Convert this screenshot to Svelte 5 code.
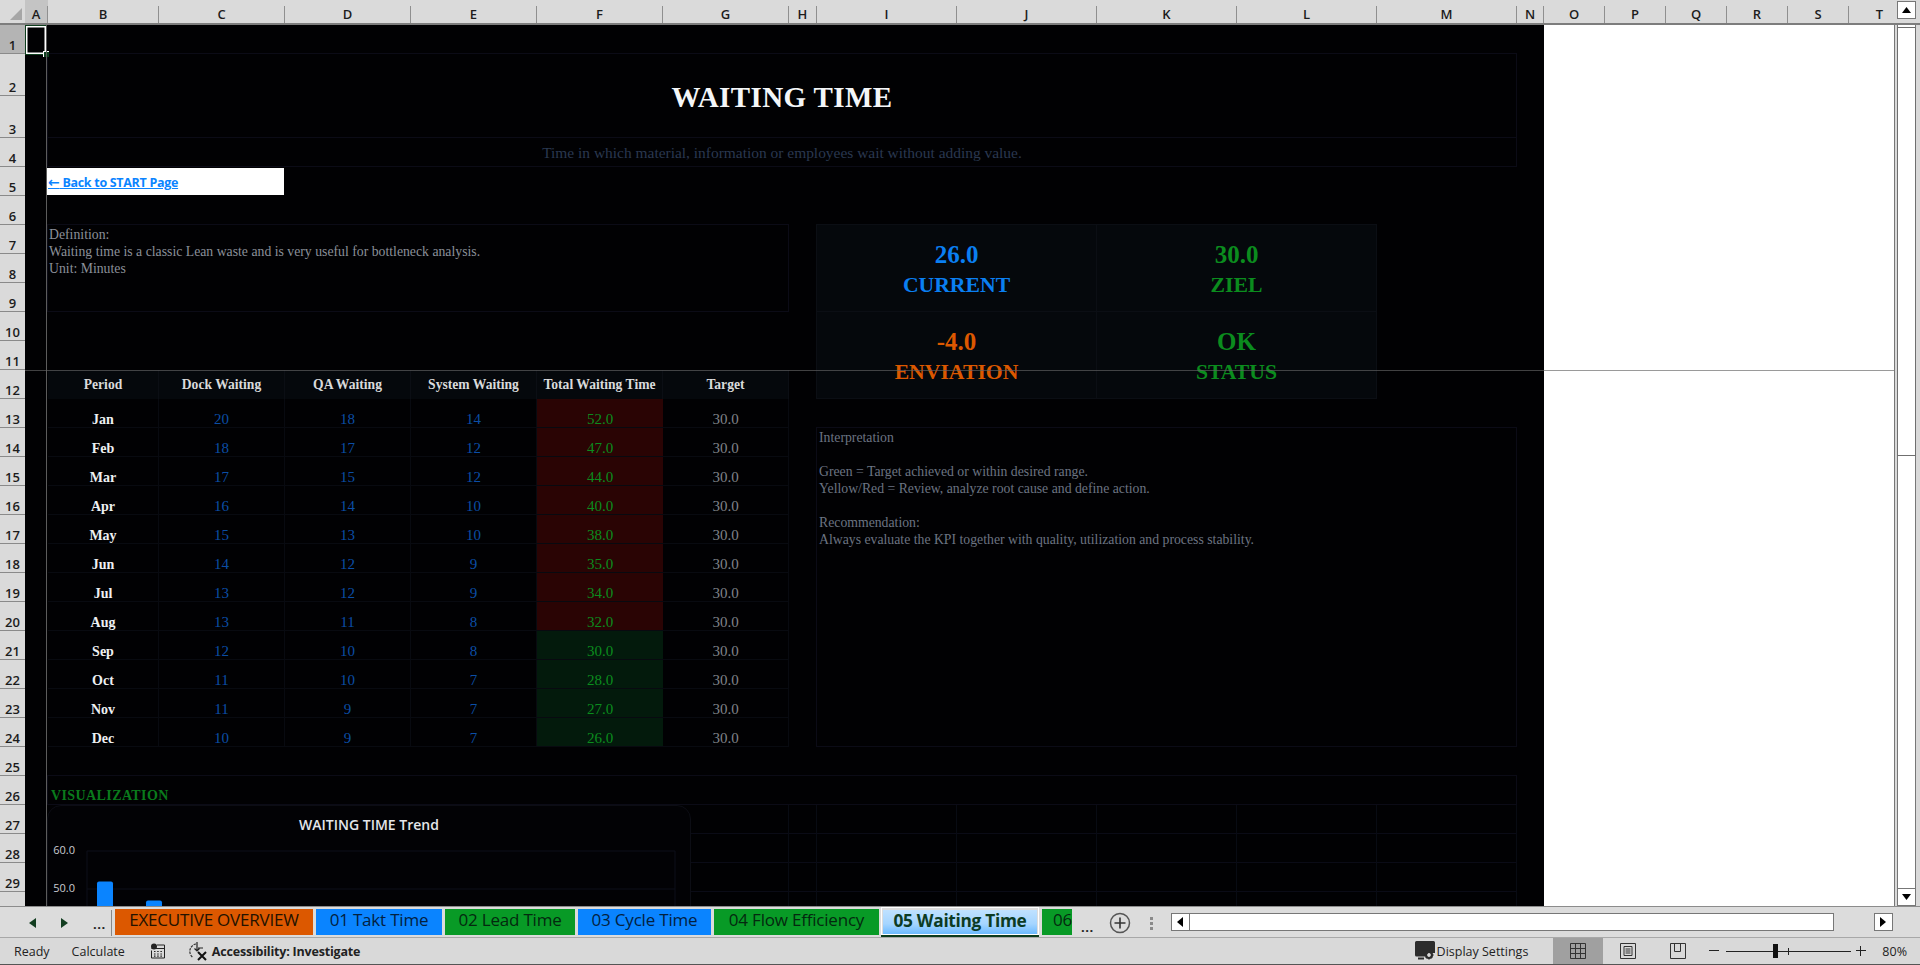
<script>
  const columns = ['A', 'B', 'C', 'D', 'E', 'F', 'G', 'H', 'I', 'J', 'K', 'L', 'M', 'N', 'O', 'P', 'Q', 'R', 'S', 'T']
  const rowNumbers = Array.from({ length: 29 }, (_, i) => i + 1)

  const headers = ['Period', 'Dock Waiting', 'QA Waiting', 'System Waiting', 'Total Waiting Time', 'Target']
  const months = [
    ['Jan', 20, 18, 14, 52],
    ['Feb', 18, 17, 12, 47],
    ['Mar', 17, 15, 12, 44],
    ['Apr', 16, 14, 10, 40],
    ['May', 15, 13, 10, 38],
    ['Jun', 14, 12, 9, 35],
    ['Jul', 13, 12, 9, 34],
    ['Aug', 13, 11, 8, 32],
    ['Sep', 12, 10, 8, 30],
    ['Oct', 11, 10, 7, 28],
    ['Nov', 11, 9, 7, 27],
    ['Dec', 10, 9, 7, 26]
  ]
  const target = 30

  const kpis = [
    { value: '26.0', label: 'CURRENT', tone: 'blue' },
    { value: '30.0', label: 'ZIEL', tone: 'green' },
    { value: '-4.0', label: 'ENVIATION', tone: 'orange' },
    { value: 'OK', label: 'STATUS', tone: 'green' }
  ]

  const tabs = [
    { name: 'EXECUTIVE OVERVIEW', cls: 'orange', width: 198 },
    { name: '01 Takt Time', cls: 'blue', width: 126 },
    { name: '02 Lead Time', cls: 'green', width: 130 },
    { name: '03 Cycle Time', cls: 'blue', width: 133 },
    { name: '04 Flow Efficiency', cls: 'green', width: 165 },
    { name: '05 Waiting Time', cls: 'active', width: 158 },
    { name: '06', cls: 'green cut', width: 30 }
  ]

  // chart scale: 10 units = 38px, baseline of the plot is at 60.0
  const plotTop = 45
  const toY = (v) => plotTop + (60 - v) * 3.8
  const bars = months.map((m, i) => ({ x: 50 + i * 49, y: toY(m[4]), h: 380 - toY(m[4]) }))
  const ticks = [60, 50]

  const fillerCells = Array.from({ length: 48 })
</script>

<div class="app">
  <div class="colhead">
    <div class="corner"><span class="tri"></span></div>
    {#each columns as col, i}
      <div class="col col-{col}" class:sel={i === 0}>{col}</div>
    {/each}
    <div class="vs-top"><button class="sb-btn" aria-label="up"><svg width="9" height="6" viewBox="0 0 9 6"><path d="M0 6 4.500 0 9 6z" fill="#000" /></svg></button></div>
  </div>

  <div class="main">
    <div class="rowhead">
      {#each rowNumbers as n}
        <div class="rownum" class:tall={n === 2 || n === 3} class:sel={n === 1}>{n}</div>
      {/each}
    </div>

    <div class="sheet">
      <div class="blank"></div>
      <div class="activecell"><span class="handle"></span></div>

      <div class="box title">WAITING TIME</div>
      <div class="box subtitle">Time in which material, information or employees wait without adding value.</div>
      <div class="backlink"><a href="#start"><span class="arrow">←</span> Back to START Page</a></div>

      <div class="box note definition">
        <div>Definition:</div>
        <div>Waiting time is a classic Lean waste and is very useful for bottleneck analysis.</div>
        <div>Unit: Minutes</div>
      </div>

      <div class="kpis">
        {#each kpis as k}
          <div class="kpi {k.tone}">
            <div class="kpi-value">{k.value}</div>
            <div class="kpi-label">{k.label}</div>
          </div>
        {/each}
      </div>

      <div class="table">
        {#each headers as h}
          <div class="th">{h}</div>
        {/each}
        {#each months as m}
          <div class="td month">{m[0]}</div>
          <div class="td num">{m[1]}</div>
          <div class="td num">{m[2]}</div>
          <div class="td num">{m[3]}</div>
          <div class="td total" class:over={m[4] > target}>{m[4].toFixed(1)}</div>
          <div class="td tgt">{target.toFixed(1)}</div>
        {/each}
      </div>

      <div class="box note interp">
        <div>Interpretation</div>
        <div class="gap">Green = Target achieved or within desired range.</div>
        <div>Yellow/Red = Review, analyze root cause and define action.</div>
        <div class="gap">Recommendation:</div>
        <div>Always evaluate the KPI together with quality, utilization and process stability.</div>
      </div>

      <div class="box vis">VISUALIZATION</div>

      <div class="filler">
        {#each fillerCells as _}
          <div class="fcell"></div>
        {/each}
      </div>

      <div class="chart">
        <div class="chart-title">WAITING TIME Trend</div>
        <svg class="plot" width="644" height="100" viewBox="0 0 644 100">
          {#each ticks as t}
            <line x1="40" x2="628" y1={toY(t)} y2={toY(t)} stroke="#0c0f1a" />
            <text x="28" y={toY(t) + 3} text-anchor="end">{t.toFixed(1)}</text>
          {/each}
          <line x1="40" x2="40" y1={plotTop} y2="100" stroke="#0c0f1a" />
          <line x1="628" x2="628" y1={plotTop} y2="100" stroke="#0c0f1a" />
          {#each bars as b}
            <rect x={b.x} y={b.y} width="16" height={b.h} rx="2" fill="#0a84ff" />
          {/each}
        </svg>
      </div>

      <div class="freeze-v"></div>
      <div class="freeze-h"></div>
    </div>

    <div class="vscroll">
      <div class="thumb"></div>
      <button class="sb-btn down" aria-label="down"><svg width="9" height="6" viewBox="0 0 9 6"><path d="M0 0 4.500 6 9 0z" fill="#000" /></svg></button>
    </div>
  </div>

  <div class="tabbar">
    <div class="tabnav">
      <svg width="7" height="10" viewBox="0 0 7 10"><path d="M7 0v10L0 5z" fill="#123d20" /></svg>
      <svg width="7" height="10" viewBox="0 0 7 10"><path d="M0 0v10l7-5z" fill="#123d20" /></svg>
      <span class="dots">...</span>
    </div>
    <div class="tabs">
      {#each tabs as t}
        <div class="tab {t.cls}" style="width:{t.width}px">{t.name}</div>
      {/each}
    </div>
    <span class="dots more">...</span>
    <svg class="add" width="22" height="22" viewBox="0 0 22 22">
      <circle cx="11" cy="11" r="9.500" fill="none" stroke="#555" stroke-width="1.500" />
      <path d="M11 5.500v11M5.500 11h11" stroke="#333" stroke-width="1.600" />
    </svg>
    <div class="kebab"><i></i><i></i><i></i></div>
    <div class="hscroll">
      <button class="sb-btn side" aria-label="left"><svg width="6" height="10" viewBox="0 0 6 10"><path d="M6 0v10L0 5z" fill="#000" /></svg></button>
      <div class="htrack"></div>
      <button class="sb-btn side right" aria-label="right"><svg width="6" height="10" viewBox="0 0 6 10"><path d="M0 0v10l6-5z" fill="#000" /></svg></button>
    </div>
  </div>

  <div class="status">
    <span class="st ready">Ready</span>
    <span class="st calc">Calculate</span>
    <svg class="macro" width="16" height="16" viewBox="0 0 16 16">
      <circle cx="4" cy="3.500" r="3" fill="#222" />
      <path d="M7 2h7.500v13H1.500V7.500" fill="none" stroke="#222" />
      <path d="M1.500 5.500h13" stroke="#222" />
      <path d="M4 8.500h1.500M7.200 8.500h1.500M10.400 8.500h1.500M4 11h1.500M7.200 11h1.500M10.400 11h1.500M4 13.200h1.500M7.200 13.200h1.500M10.400 13.200h1.500" stroke="#222" stroke-width="1.200" />
    </svg>
    <svg class="a11y" width="21" height="20" viewBox="0 0 21 20">
      <path d="M8 3A7.500 7.500 0 0 0 5 16.500" fill="none" stroke="#333" stroke-width="1.200" stroke-dasharray="2.500 1" />
      <path d="M9 1v9M6.500 7.500 9 10l2.500-2.500M10 7h5" fill="none" stroke="#222" stroke-width="1.200" />
      <path d="M10 11l8 8M18 11l-8 8" stroke="#111" stroke-width="2" />
    </svg>
    <span class="st access">Accessibility: Investigate</span>

    <div class="st-right">
      <svg class="display" width="21" height="20" viewBox="0 0 21 20">
        <path d="M1.500 0h17a1.500 1.500 0 0 1 1.500 1.500V12h-7l-3 3.500H1.500A1.500 1.500 0 0 1 0 14V1.500A1.500 1.500 0 0 1 1.500 0z" fill="#2c2c2c" />
        <circle cx="14" cy="14" r="3" fill="none" stroke="#2c2c2c" stroke-width="2.200" />
        <path d="M14 9.500v2M14 16.500v2M9.500 14h2M16.500 14h2M11 11l1.400 1.400M15.600 15.600 17 17M17 11l-1.400 1.400M12.400 15.600 11 17" stroke="#2c2c2c" stroke-width="1.400" />
        <path d="M3 17.500h6" stroke="#2c2c2c" stroke-width="2" />
      </svg>
      <span class="st disp">Display Settings</span>
      <div class="view on">
        <svg width="16" height="16" viewBox="0 0 16 16"><path d="M.5.500h15v15H.5zM5.500.500v15M10.500.500v15M.5 5.500h15M.5 10.500h15" fill="none" stroke="#333" /></svg>
      </div>
      <div class="view">
        <svg width="16" height="16" viewBox="0 0 16 16"><path d="M.5.500h15v15H.5z" fill="none" stroke="#333" /><path d="M4 3.500h8v9H4zM5.500 6h5M5.500 8h5M5.500 10h5" fill="none" stroke="#333" /></svg>
      </div>
      <div class="view">
        <svg width="16" height="16" viewBox="0 0 16 16"><path d="M.5.500h15v15H.5zM4.500.500v8h6v-8" fill="none" stroke="#333" /></svg>
      </div>
      <span class="zoom-sign minus"></span>
      <div class="slider"><span class="knob"></span><span class="tick"></span></div>
      <span class="zoom-sign plus"></span>
      <span class="st pct">80%</span>
    </div>
  </div>
</div>

<style>
  :global(body) {
    margin: 0;
    background: #d9d9d9;
  }

  .app {
    width: 1920px;
    height: 965px;
    display: flex;
    flex-direction: column;
    overflow: hidden;
    font-family: "Open Sans", "Noto Sans", sans-serif;
    color: #222;
  }

  button {
    padding: 0;
    font: inherit;
  }

  /* column letters */
  .colhead {
    display: flex;
    height: 25px;
    flex: none;
    background: #dadada;
    box-sizing: border-box;
    border-bottom: 2px solid #7d7d7d;
  }

  .corner {
    width: 25px;
    flex: none;
    position: relative;
  }

  .tri {
    position: absolute;
    right: 3px;
    bottom: 3px;
    border-left: 12px solid transparent;
    border-bottom: 12px solid #a6a6a6;
  }

  .col {
    flex: none;
    margin-top: 6px;
    height: 17px;
    line-height: 17px;
    box-sizing: border-box;
    border-right: 1px solid #8f8f8f;
    text-align: center;
    font-size: 13px;
    font-weight: 600;
    color: #1c1c1c;
  }

  .col.sel {
    background: #c4c4c4;
    box-shadow: 0 -6px 0 #c4c4c4;
  }

  .col-A { width: 23px; }
  .col-B { width: 111px; }
  .col-C, .col-D, .col-E, .col-F, .col-G { width: 126px; }
  .col-H { width: 28px; }
  .col-N { width: 27px; }
  .col-I, .col-J, .col-K, .col-L, .col-M { width: 140px; }
  .col-O, .col-P, .col-Q, .col-R, .col-S { width: 61px; }
  .col-T { width: 45px; padding-left: 16px; border-right: 0; }

  .vs-top {
    width: 26px;
    padding: 1px 0 0 3px;
    box-sizing: border-box;
  }

  .main {
    flex: 1;
    min-height: 0;
    display: flex;
  }

  .rowhead {
    width: 25px;
    flex: none;
    overflow: hidden;
    background: #dadada;
  }

  .rownum {
    height: 29px;
    box-sizing: border-box;
    border-bottom: 1px solid #8a8a8a;
    text-align: center;
    font-size: 13px;
    font-weight: 600;
    line-height: 16px;
    padding-top: 12px;
    color: #1c1c1c;
  }

  .rownum.tall {
    height: 42px;
    padding-top: 25px;
  }

  .rownum.sel {
    background: #b4b4b4;
  }

  /* worksheet */
  .sheet {
    position: relative;
    width: 1869px;
    flex: none;
    overflow: hidden;
    background: #010103;
    display: grid;
    grid-template-columns: 23px 111px repeat(5, 126px) 28px repeat(5, 140px) 27px repeat(5, 61px) 45px;
    grid-template-rows: 29px 42px 42px repeat(27, 29px);
    font-family: "Liberation Serif", "Noto Serif", serif;
  }

  .blank {
    grid-column: 15 / 21;
    grid-row: 1 / 31;
    background: #fff;
  }

  .activecell {
    position: absolute;
    left: 0;
    top: 0;
    width: 22px;
    height: 30px;
    box-sizing: border-box;
    border: 1px solid #0e3f1e;
    box-shadow: inset 0 0 0 1.500px #fff;
  }

  .handle {
    position: absolute;
    right: -3px;
    bottom: -3px;
    width: 5px;
    height: 5px;
    background: #0e3f1e;
    border: 1px solid #fff;
    border-width: 1px 0 0 1px;
  }

  .box {
    box-sizing: border-box;
    border: 1px solid #0b0b16;
    margin-left: -1px;
    margin-top: -1px;
  }

  .title {
    grid-column: 2 / 14;
    grid-row: 2 / 4;
    display: flex;
    align-items: center;
    justify-content: center;
    padding-top: 3px;
    font-size: 29px;
    font-weight: 700;
    color: #f4f6f8;
    letter-spacing: 0.4px;
  }

  .subtitle {
    grid-column: 2 / 14;
    grid-row: 4;
    display: flex;
    align-items: center;
    justify-content: center;
    padding-top: 2px;
    font-size: 15.450px;
    color: #2a3850;
  }

  .backlink {
    grid-column: 2 / 4;
    grid-row: 5;
    background: #fff;
    margin: 1px 1px 1px -1px;
    padding: 2px 0 0 1px;
    display: flex;
    align-items: center;
  }

  .backlink a {
    color: #0a84ff;
    font-family: "Open Sans", sans-serif;
    font-size: 12.500px;
    font-weight: 700;
    letter-spacing: -0.3px;
  }

  .arrow {
    font-family: "DejaVu Sans", sans-serif;
    font-size: 14px;
    line-height: 12px;
  }

  .note {
    padding: 1px 2px;
    font-size: 13.750px;
    line-height: 17px;
  }

  .definition {
    grid-column: 2 / 8;
    grid-row: 7 / 10;
    padding-left: 1px;
    color: #8b9099;
  }

  .interp {
    grid-column: 9 / 14;
    grid-row: 14 / 25;
    color: #6c7482;
  }

  .gap {
    margin-top: 17px;
  }

  .kpis {
    grid-column: 9 / 13;
    grid-row: 7 / 13;
    display: grid;
    grid-template-columns: 1fr 1fr;
    grid-template-rows: 1fr 1fr;
  }

  .kpi {
    background: #05080c;
    border: 1px solid #0b0e14;
    margin: -1px 0 0 -1px;
    display: flex;
    flex-direction: column;
    align-items: center;
    padding-top: 15px;
    font-weight: 700;
  }

  .kpi.blue { color: #0a7ff2; }
  .kpi.green { color: #0b8c1e; }
  .kpi.orange { color: #dc5800; }

  .kpi-value {
    font-size: 25px;
    line-height: 29px;
  }

  .kpi-label {
    font-size: 21.700px;
    line-height: 33px;
  }

  .table {
    grid-column: 2 / 8;
    grid-row: 12 / 25;
    display: grid;
    grid-template-columns: subgrid;
    grid-template-rows: subgrid;
  }

  .th {
    background: #05080c;
    border-right: 1px solid #0b0e14;
    display: flex;
    align-items: center;
    justify-content: center;
    font-size: 13.600px;
    font-weight: 700;
    color: #d9dadb;
  }

  .td {
    box-sizing: border-box;
    border-right: 1px solid #080a10;
    border-bottom: 1px solid #080a10;
    display: flex;
    align-items: flex-end;
    justify-content: center;
    font-size: 15px;
    line-height: 15px;
  }

  .month {
    color: #eef0f2;
    font-size: 14px;
    font-weight: 700;
  }

  .num { color: #0b4ea6; }

  .total {
    background: #031a0c;
    color: #0b8c1e;
    border-right: 0;
  }

  .total.over { background: #2a0404; }

  .tgt { color: #808389; }

  .vis {
    grid-column: 2 / 14;
    grid-row: 26;
    padding: 11px 0 0 3px;
    font-size: 14px;
    line-height: 18px;
    font-weight: 700;
    letter-spacing: 0.4px;
    color: #0a7a1c;
  }

  .filler {
    grid-column: 2 / 14;
    grid-row: 27 / 31;
    display: grid;
    grid-template-columns: subgrid;
    grid-template-rows: subgrid;
  }

  .fcell {
    border-right: 1px solid #080b13;
    border-bottom: 1px solid #0a0b16;
  }

  .chart {
    position: absolute;
    left: 22px;
    top: 780px;
    width: 644px;
    height: 130px;
    box-sizing: border-box;
    background: #020205;
    border-radius: 14px 14px 0 0;
    border: 1px solid #0c0d14;
    font-family: "Open Sans", sans-serif;
  }

  .chart-title {
    height: 38px;
    padding-top: 9px;
    box-sizing: border-box;
    text-align: center;
    font-size: 14px;
    font-weight: 600;
    color: #e4e6ea;
  }

  .plot {
    position: absolute;
    left: -1px;
    top: 0;
  }

  .plot text {
    font-size: 11px;
    fill: #c9ccd1;
  }

  .freeze-v {
    position: absolute;
    left: 21px;
    top: 0;
    bottom: 0;
    width: 1px;
    background: #5c5c5c;
  }

  .freeze-h {
    position: absolute;
    left: 0;
    right: 0;
    top: 345px;
    height: 1px;
    background: rgba(100, 100, 100, 0.65);
  }

  /* vertical scrollbar */
  .vscroll {
    position: relative;
    width: 26px;
    flex: none;
    background: #d9d9d9;
    box-sizing: border-box;
    border-left: 1px solid #777;
  }

  .vscroll::before {
    content: '';
    position: absolute;
    left: 2px;
    top: 0;
    bottom: 0;
    width: 19px;
    background: #fff;
    border: 1px solid #777;
    border-width: 0 1px;
    box-sizing: border-box;
  }

  .thumb {
    position: absolute;
    left: 2px;
    top: 2px;
    width: 19px;
    height: 429px;
    box-sizing: border-box;
    background: #fff;
    border: 1px solid #6f6f6f;
  }

  .sb-btn {
    width: 19px;
    height: 18px;
    display: flex;
    align-items: center;
    justify-content: center;
    background: #fff;
    border: 1px solid #777;
  }

  .sb-btn.down {
    position: absolute;
    left: 2px;
    bottom: 0;
  }

  /* sheet tabs */
  .tabbar {
    height: 32px;
    flex: none;
    box-sizing: border-box;
    border-top: 1px solid #8c8c8c;
    border-bottom: 1px solid #a8a8a8;
    background: #dcdcdc;
    display: flex;
    align-items: flex-start;
  }

  .tabnav {
    width: 112px;
    flex: none;
    height: 26px;
    margin-top: 3px;
    box-sizing: border-box;
    border-right: 1px solid #888;
    display: flex;
    align-items: center;
    gap: 25px;
    padding-left: 29px;
  }

  .dots {
    font-size: 13px;
    font-weight: 700;
    line-height: 13px;
    letter-spacing: 0.5px;
    color: #222;
    margin-top: 2px;
  }

  .tabs {
    display: flex;
    gap: 3px;
    flex: none;
    margin-left: 3px;
    margin-top: 2px;
  }

  .tab {
    height: 26px;
    flex: none;
    box-sizing: border-box;
    font-size: 17px;
    line-height: 21px;
    text-align: center;
    white-space: nowrap;
    overflow: hidden;
    color: #11200f;
    letter-spacing: -0.2px;
  }

  .tab.orange { background: #dc5800; color: #231200; }
  .tab.blue { background: #0a84ff; color: #03213f; }
  .tab.green { background: #089a26; color: #04290f; }
  .tab.cut { text-align: right; }

  .tab.active {
    height: 30px;
    margin: -2px 0 0 -1px;
    padding: 3px 2px 0;
    font-weight: 700;
    font-size: 17.300px;
    line-height: 21px;
    letter-spacing: -0.3px;
    color: #0c3b24;
    background-clip: content-box;
    background-color: #fff;
    background-image: linear-gradient(#c5e4ff 0%, #a5d5ff 60%, #66b8ff 100%);
    border-bottom: 2px solid #0c3b1c;
    box-shadow: inset 0 0 0 1px #fff;
  }

  .more {
    margin-left: 9px;
    margin-top: 14px;
  }

  .add {
    margin: 5px 0 0 15px;
  }

  .kebab {
    display: flex;
    flex-direction: column;
    gap: 2px;
    margin: 10px 0 0 19px;
  }

  .kebab i {
    width: 3px;
    height: 3px;
    background: #8a8a8a;
  }

  .hscroll {
    margin: 6px 0 0 18px;
    height: 18px;
    display: flex;
  }

  .hscroll .side {
    height: 18px;
    flex: none;
  }

  .htrack {
    width: 644px;
    box-sizing: border-box;
    background: #fff;
    border: 1px solid #777;
    border-left: 0;
  }

  .hscroll .right {
    margin-left: 40px;
  }

  /* status bar */
  .status {
    height: 27px;
    flex: none;
    box-sizing: border-box;
    background: #d9d9d9;
    border-bottom: 1px solid #555;
    display: flex;
    align-items: center;
    font-size: 12.500px;
    color: #222;
    position: relative;
  }

  .ready { margin-left: 14px; }
  .calc { margin-left: 22px; }
  .macro { margin-left: 25px; }
  .a11y { margin-left: 22px; }

  .access {
    margin-left: 3px;
    font-weight: 700;
    letter-spacing: -0.2px;
  }

  .st-right {
    margin-left: auto;
    display: flex;
    align-items: center;
    height: 100%;
  }

  .disp {
    margin-left: 1px;
    margin-right: 25px;
  }

  .view {
    width: 50px;
    height: 100%;
    display: flex;
    align-items: center;
    justify-content: center;
  }

  .view.on {
    background: #a0a0a0;
  }

  .zoom-sign {
    position: relative;
    width: 10px;
    height: 10px;
    margin-left: 6px;
  }

  .zoom-sign::before {
    content: '';
    position: absolute;
    left: 0;
    right: 0;
    top: 4px;
    height: 1px;
    background: #222;
  }

  .zoom-sign.plus::after {
    content: '';
    position: absolute;
    top: 0;
    bottom: 0;
    left: 4px;
    width: 1px;
    background: #222;
  }

  .slider {
    position: relative;
    width: 125px;
    height: 1px;
    margin-left: 7px;
    background: #222;
  }

  .knob {
    position: absolute;
    left: 47px;
    top: -7px;
    width: 5px;
    height: 14px;
    background: #111;
  }

  .tick {
    position: absolute;
    left: 62px;
    top: -3px;
    width: 1px;
    height: 7px;
    background: #222;
  }

  .slider + .zoom-sign {
    margin-left: 5px;
  }

  .pct {
    margin: 0 13px 0 16px;
  }
</style>
